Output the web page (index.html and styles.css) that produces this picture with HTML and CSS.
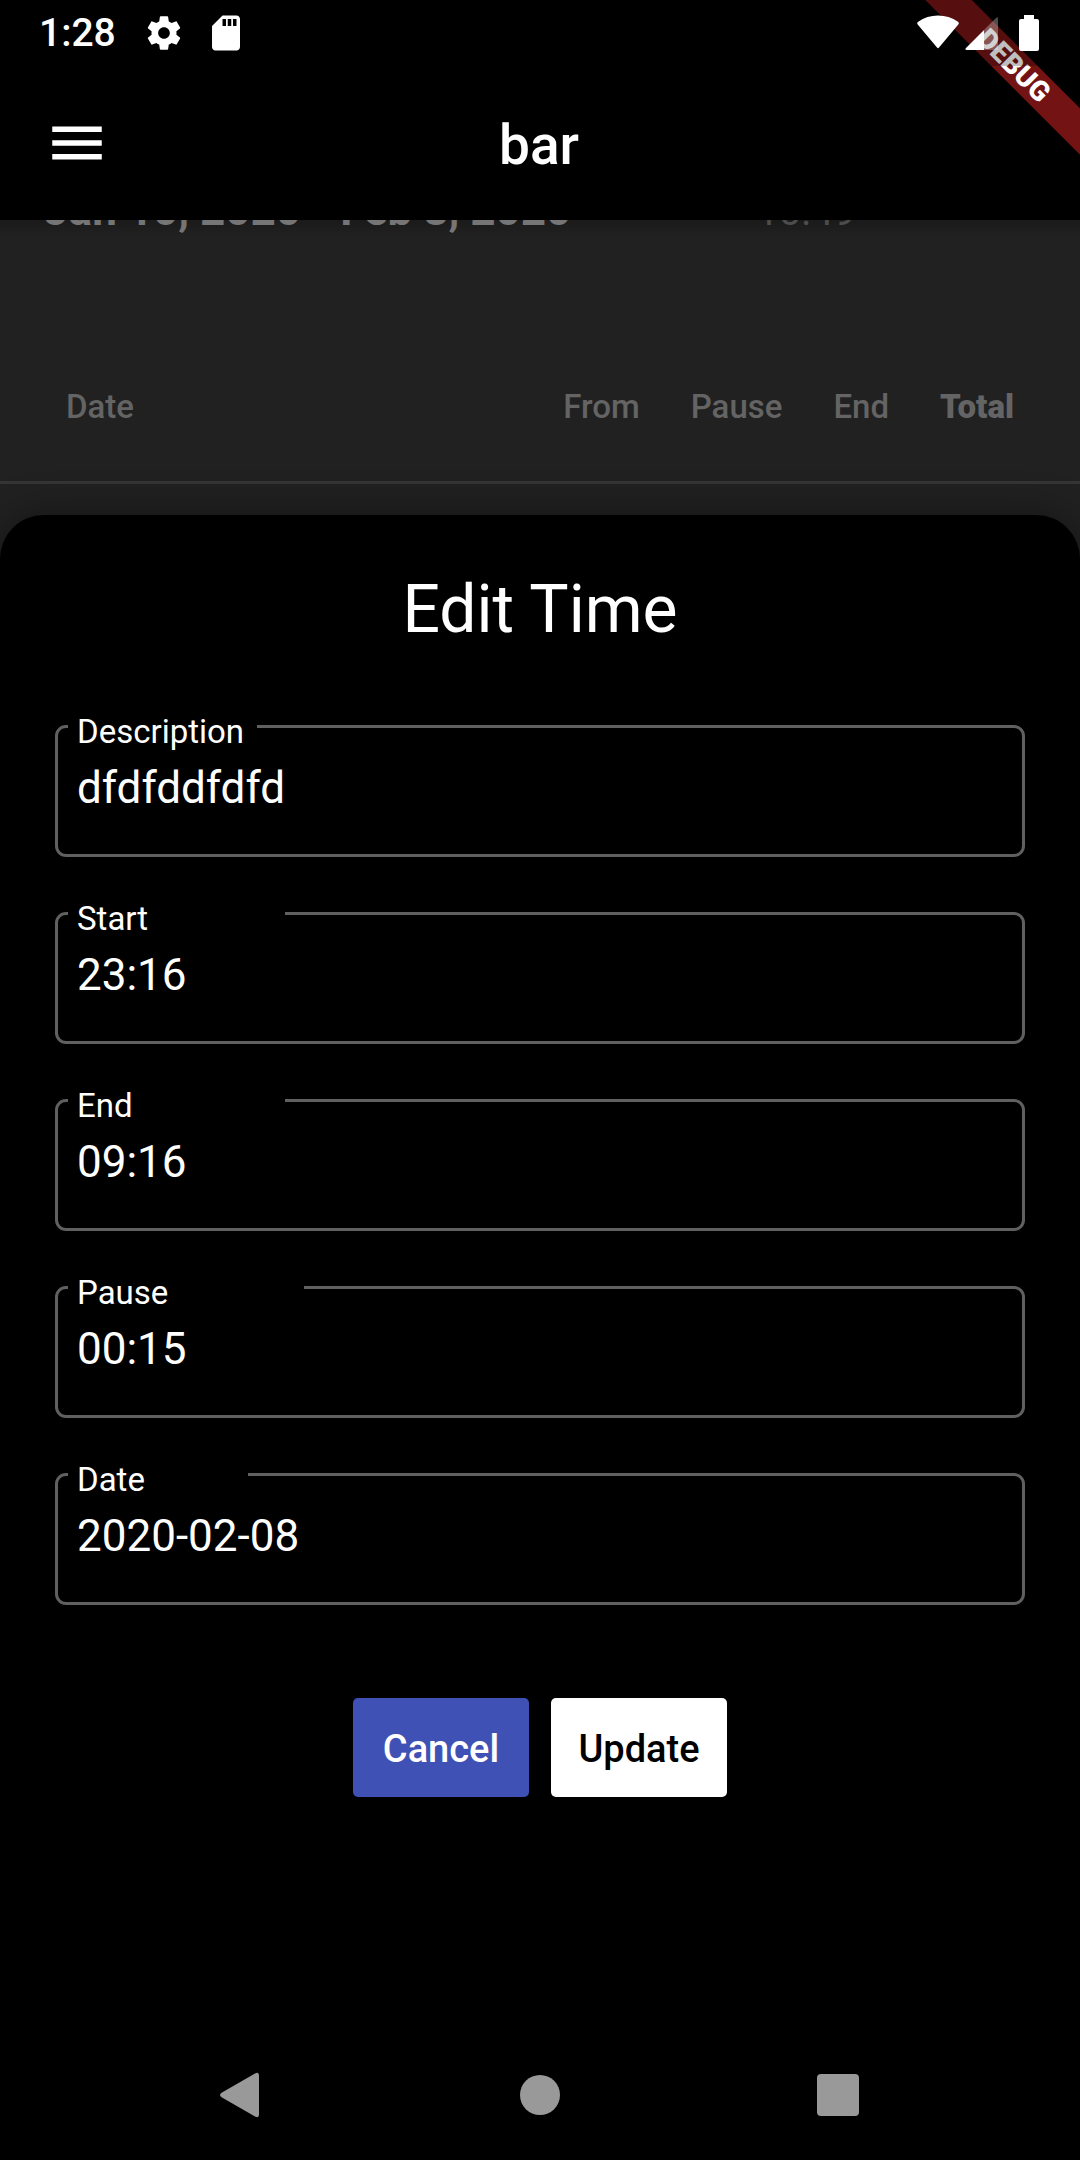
FILE: index.html
```html
<!DOCTYPE html>
<html lang="en">
<head>
<meta charset="utf-8">
<meta name="viewport" content="width=device-width, initial-scale=1">
<title>bar</title>
<link rel="stylesheet" href="styles.css">
</head>
<body>
<div class="screen">
  <div class="debug-banner"><span>DEBUG</span></div>
  <div class="status">
    <div class="status-left">
      <span class="clock">1:28</span>
      <svg class="gear" width="40" height="40" viewBox="0 0 24 24" fill="#fff" aria-hidden="true"><path d="M19.43 12.98c.04-.32.07-.64.07-.98s-.03-.66-.07-.98l2.11-1.65c.19-.15.24-.42.12-.64l-2-3.46c-.12-.22-.39-.3-.61-.22l-2.49 1c-.52-.4-1.08-.73-1.69-.98l-.38-2.65C14.46 2.18 14.25 2 14 2h-4c-.25 0-.46.18-.49.42l-.38 2.65c-.61.25-1.17.59-1.69.98l-2.49-1c-.23-.09-.49 0-.61.22l-2 3.46c-.13.22-.07.49.12.64l2.11 1.65c-.04.32-.07.65-.07.98s.03.66.07.98l-2.11 1.65c-.19.15-.24.42-.12.64l2 3.46c.12.22.39.3.61.22l2.49-1c.52.4 1.08.73 1.69.98l.38 2.65c.03.24.24.42.49.42h4c.25 0 .46-.18.49-.42l.38-2.65c.61-.25 1.17-.59 1.69-.98l2.49 1c.23.09.49 0 .61-.22l2-3.46c.12-.22.07-.49-.12-.64l-2.11-1.65zM12 15.5c-1.93 0-3.500-1.570-3.500-3.500s1.570-3.500 3.500-3.500 3.500 1.570 3.500 3.500-1.570 3.500-3.500 3.500z"/></svg>
      <svg width="42" height="42" viewBox="0 0 24 24" fill="#fff" aria-hidden="true"><path d="M18 2h-8L4.020 8 4 20c0 1.100.9 2 2 2h12c1.100 0 2-.9 2-2V4c0-1.100-.9-2-2-2zm-6 6h-2V4h2v4zm3 0h-2V4h2v4zm3 0h-2V4h2v4z"/></svg>
    </div>
    <svg class="signals" width="122" height="36" viewBox="0 0 122 36" fill="#fff" aria-hidden="true">
      <path d="M.7 9.500Q-.5 8 1.200 6.800Q10 .6 21 .6T41 6.800Q42.500 8 41.300 9.500L22 32.500Q21 34 20 32.500Z"/>
      <path d="M67 15V35H50Q47 35 49.500 32.500Z"/>
      <path fill-opacity=".3" d="M67 15L79 3Q81 1 81 4V35H67Z"/>
      <path d="M107 0H117V4H120Q122 4 122 6V34Q122 36 120 36H104Q102 36 102 34V6Q102 4 104 4H107Z"/>
    </svg>
  </div>
  <header class="appbar">
    <button class="menu" aria-label="Open menu"><svg width="66" height="66" viewBox="0 0 24 24" fill="#fff"><path d="M3 18h18v-2H3v2zm0-5h18v-2H3v2zm0-7v2h18V6H3z"/></svg></button>
    <h1>bar</h1>
  </header>
  <main class="backdrop">
    <div class="range"><strong>Jan 10, 2020 - Feb 8, 2020</strong><span>10:49</span></div>
    <table>
      <thead><tr><th>Date</th><th>From</th><th>Pause</th><th>End</th><th class="total">Total</th></tr></thead>
    </table>
  </main>
  <section class="sheet">
    <h2>Edit Time</h2>
    <form>
      <fieldset><legend class="gap-description"><label for="description">Description</label></legend><input id="description" type="text" value="dfdfddfdfd"></fieldset>
      <fieldset><legend class="gap-time"><label for="start">Start</label></legend><input id="start" type="text" value="23:16"></fieldset>
      <fieldset><legend class="gap-time"><label for="end">End</label></legend><input id="end" type="text" value="09:16"></fieldset>
      <fieldset><legend class="gap-pause"><label for="pause">Pause</label></legend><input id="pause" type="text" value="00:15"></fieldset>
      <fieldset><legend class="gap-date"><label for="date">Date</label></legend><input id="date" type="text" value="2020-02-08"></fieldset>
      <div class="actions"><button class="cancel" type="button">Cancel</button><button class="update" type="submit">Update</button></div>
    </form>
  </section>
  <nav class="navbar">
    <button aria-label="Back"><svg width="44" height="46" viewBox="0 0 44 46"><path d="M4 20.500L37 1.500Q41 -.5 41 3.500V42.500Q41 46.500 37 44.500L4 25.500Q0 23 4 20.500Z"/></svg></button>
    <button aria-label="Home"><svg width="44" height="46" viewBox="0 0 44 46"><circle cx="23" cy="23" r="20"/></svg></button>
    <button aria-label="Recent apps"><svg width="44" height="46" viewBox="0 0 44 46"><rect x="1" y="2" width="42" height="42" rx="4"/></svg></button>
  </nav>
</div>
</body>
</html>
```
FILE: styles.css
```css
* { box-sizing: border-box; }
body {
  margin: 0;
  background: #000;
  color: #fff;
  font-family: Roboto, "Liberation Sans", sans-serif;
}
h1, h2 { margin: 0; }
button { border: 0; padding: 0; background: none; font: inherit; }
svg { display: block; }

.screen {
  position: relative;
  display: flex;
  flex-direction: column;
  min-height: 100vh;
  overflow: hidden;
}

/* Status bar */
.status {
  z-index: 2;
  display: flex;
  justify-content: space-between;
  height: 66px;
  padding: 0 41px 0 39px;
  background: rgba(0, 0, 0, .25);
}
.status-left { display: flex; align-items: center; }
.clock { font-size: 39px; font-weight: 500; line-height: 68px; }
.gear { margin: 0 21px 0 28px; }
.signals { margin-top: 15px; }

.debug-banner {
  position: absolute;
  top: 0;
  right: 0;
  width: 165px;
  height: 165px;
  overflow: hidden;
}
.debug-banner span {
  position: absolute;
  top: 49px;
  left: -41px;
  width: 280px;
  height: 33px;
  background: #731313;
  font-size: 28px;
  font-weight: 900;
  line-height: 33px;
  text-align: center;
  transform: rotate(45deg);
}

/* App bar */
.appbar {
  display: grid;
  grid-template-columns: 110px 1fr 112px;
  align-items: center;
  height: 154px;
}
.menu { padding-left: 44px; }
.appbar h1 {
  font-size: 55px;
  font-weight: 500;
  line-height: 64px;
  padding-top: 3px;
  text-align: center;
}

/* Dimmed page behind the sheet */
.backdrop {
  height: 339px;
  margin-bottom: -44px;
  overflow: hidden;
  background: linear-gradient(#1a1a1a, #212121 16px);
  color: #646464;
}
.range {
  display: flex;
  align-items: baseline;
  justify-content: space-between;
  height: 52px;
  margin-top: -36px;
  padding: 0 224px 0 44px;
  line-height: 52px;
}
.range strong { color: #757575; font-size: 44px; }
.range span { color: #4c4c4c; font-size: 40px; }
table {
  width: 100%;
  margin-top: 96px;
  border-collapse: collapse;
}
th {
  height: 150px;
  padding: 0 0 0 51px;
  border-bottom: 3px solid #353535;
  font-size: 33px;
  font-weight: 500;
  text-align: right;
  white-space: nowrap;
}
th:first-child { width: 50%; padding-left: 66px; text-align: left; }
.total { padding-right: 66px; font-weight: 900; }

/* Bottom sheet */
.sheet {
  flex: 1;
  padding: 56px 55px 0;
  border-radius: 44px 44px 0 0;
  background: #000;
  box-shadow: 0 0 40px rgba(0, 0, 0, .4);
}
.sheet h2 {
  font-size: 66px;
  font-weight: 400;
  line-height: 78px;
  text-align: center;
}
form { display: flex; flex-direction: column; gap: 55px; padding-top: 76px; }
fieldset {
  height: 132px;
  min-width: 0;
  margin: 0;
  padding: 0 20px 0 10px;
  border: 3px solid #606060;
  border-radius: 11px;
}
legend { height: 3px; padding: 0 0 0 9px; font-size: 33px; line-height: 14px; }
.gap-description { width: 189px; }
.gap-time { width: 217px; }
.gap-pause { width: 236px; }
.gap-date { width: 180px; }
input {
  display: block;
  width: 100%;
  height: 60px;
  margin-top: 30px;
  padding: 0 0 0 9px;
  border: 0;
  outline: 0;
  background: none;
  color: #fff;
  font: 44px Roboto, "Liberation Sans", sans-serif;
}
.actions { display: flex; justify-content: center; gap: 22px; padding-top: 38px; }
.actions button {
  min-width: 176px;
  height: 99px;
  padding-top: 2px;
  border-radius: 5px;
  font-size: 38px;
  font-weight: 500;
}
.cancel { background: #3f51b5; color: #fff; }
.update { background: #fff; color: #000; }

/* System navigation */
.navbar {
  display: flex;
  justify-content: space-between;
  padding: 0 220px 42px 218px;
  fill: #999;
}
```
